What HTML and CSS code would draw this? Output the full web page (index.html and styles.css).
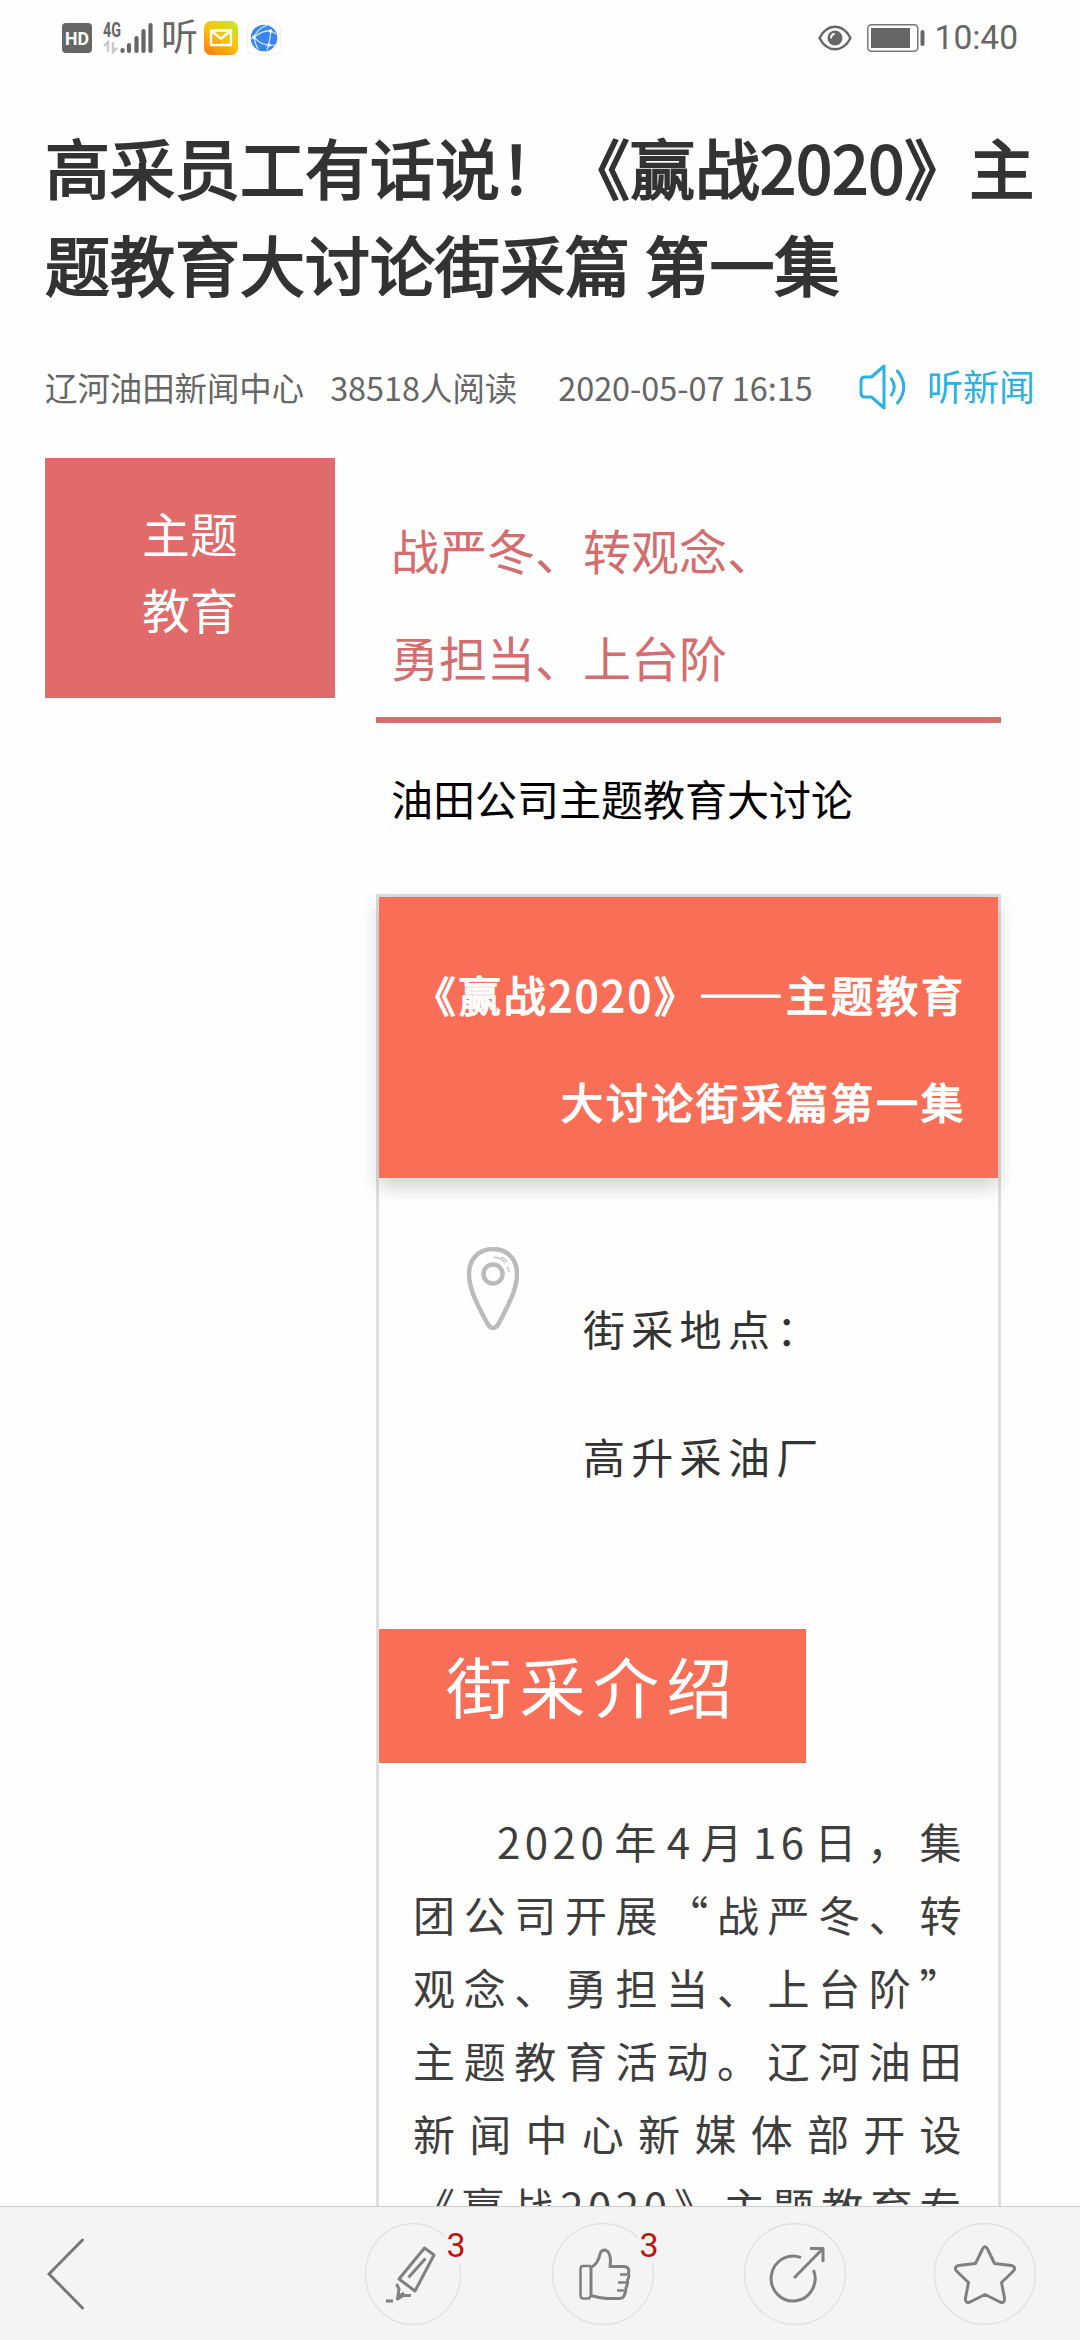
FILE: index.html
```html
<!DOCTYPE html>
<html lang="zh-CN">
<head>
    <meta charset="utf-8" />
    <title>高采员工有话说！</title>
    <link rel="stylesheet" href="styles.css">
</head>
<body>

<!--状态栏-->
<div class="status">
    <div class="status-left">
        <svg width="30" height="30" viewBox="0 0 30 30">
            <rect width="30" height="30" rx="4" fill="#666"/>
            <text x="3" y="21.5" class="hd" textLength="24" lengthAdjust="spacingAndGlyphs">HD</text>
        </svg>
        <svg class="signal" width="52" height="34" viewBox="0 0 52 34">
            <text x="0" y="15.5" class="net" textLength="18" lengthAdjust="spacingAndGlyphs">4G</text>
            <path d="M1 25l4-4v10M10 21v10l4-4" stroke="#ccc" stroke-width="2.5" fill="none"/>
            <path d="M19.500 29v1M26 24v6M33.500 17v13M40.500 10v20M47.500 4v26" stroke="#666" stroke-width="4.200" stroke-linecap="round"/>
        </svg>
        <span class="status-ting">听</span>
        <svg class="mail" width="36" height="36" viewBox="0 0 36 36">
            <defs>
                <linearGradient id="mailBg" x1="0.1" y1="1" x2="0.8" y2="0">
                    <stop offset="0" stop-color="#ff7a10"/>
                    <stop offset="0.5" stop-color="#ffbd08"/>
                    <stop offset="1" stop-color="#c8e820"/>
                </linearGradient>
            </defs>
            <rect x="1" y="1" width="34" height="34" rx="7" fill="url(#mailBg)"/>
            <path d="M8 10.500h20v14.500h-20zM8.500 11l9.500 7.500l9.500-7.500" fill="none" stroke="#fff" stroke-width="2.400" stroke-linejoin="round"/>
        </svg>
        <svg width="34" height="34" viewBox="0 0 34 34">
            <rect x=".5" y=".5" width="33" height="33" rx="7" fill="#fff" stroke="#f1f1f1"/>
            <circle cx="17" cy="17" r="13.300" fill="#3a86ee"/>
            <path d="M20.500 4Q10 8 7 16Q15 26 29 24M7 16Q16 9 24 10Q23 20 20 29M24 10l5 3M7 16l-3 2M7 16Q8 23 11 28" fill="none" stroke="#d9eaff" stroke-width="1.200"/>
            <circle cx="7" cy="16" r="1.800" fill="#fff"/><circle cx="23.500" cy="10" r="1.800" fill="#fff"/><circle cx="22" cy="24" r="1.800" fill="#fff"/>
        </svg>
    </div>
    <div class="status-right">
        <svg width="34" height="26" viewBox="0 0 34 26">
            <path d="M1.500 13C9-2 25-2 32.500 13C25 28 9 28 1.500 13z" fill="none" stroke="#666" stroke-width="2.400"/>
            <circle cx="17" cy="13" r="7.500" fill="#666"/>
            <path d="M13 12.500Q13.500 9.500 16 9" fill="none" stroke="#fff" stroke-width="2" stroke-linecap="round"/>
        </svg>
        <svg class="battery" width="58" height="28" viewBox="0 0 58 28">
            <rect x=".8" y=".8" width="50" height="26.400" rx="3.500" fill="none" stroke="#777" stroke-width="1.500"/>
            <rect x="4" y="4" width="39" height="20" fill="#666"/>
            <rect x="53.500" y="6" width="4" height="16" rx="2" fill="#666"/>
        </svg>
        <span class="time">10:40</span>
    </div>
</div>

<!--文章内容-->
<div class="article">
    <h1 class="title">高采员工有话说！《赢战2020》主题教育大讨论街采篇 第一集</h1>

    <div class="meta">
        <span class="meta-from">辽河油田新闻中心</span>
        <span class="meta-read">38518人阅读</span>
        <span class="meta-date">2020-05-07 16:15</span>
        <a class="listen">
            <svg width="48" height="46" viewBox="0 0 48 46">
                <path d="M25 2L12.500 13H6Q2 13 2 17V29Q2 33 6 33H12.500L25 44z" fill="none" stroke="#2bb1e3" stroke-width="3" stroke-linejoin="round"/>
                <path d="M32.500 15Q38 23 32.500 31M38.500 7Q51 23 38.500 39" fill="none" stroke="#2bb1e3" stroke-width="3" stroke-linecap="round"/>
            </svg>
            <span class="listen-text">听新闻</span>
        </a>
    </div>

    <div class="main">
        <div class="tag">主题<br>教育</div>
        <div class="column">
            <div class="slogan">战严冬、转观念、<br>勇担当、上台阶</div>
            <div class="subtitle">油田公司主题教育大讨论</div>

            <div class="card">
                <div class="card-head">《赢战2020》——主题教育<br>大讨论街采篇第一集</div>
                <div class="place">
                    <svg class="pin" width="52" height="83" viewBox="0 0 52 83">
                        <path d="M26 2C12 2 2 12 2 27C2 44 13 62 20 76Q26 86 32 76C39 62 50 44 50 27C50 12 40 2 26 2z" fill="none" stroke="#bbb" stroke-width="4.500"/>
                        <circle cx="26" cy="27" r="9.500" fill="none" stroke="#bbb" stroke-width="4.500"/>
                        <path d="M27 10Q35 11 38 16M40 20Q42 22 42 25M34 10Q39 12 40 15" fill="none" stroke="#c8c8c8" stroke-width="1.500"/>
                    </svg>
                    <div class="place-text">街采地点：<br>高升采油厂</div>
                </div>
                <div class="label">街采介绍</div>
                <p class="text">2020年4月16日，集团公司开展“战严冬、转观念、勇担当、上台阶”主题教育活动。辽河油田新闻中心新媒体部开设《赢战2020》主题教育专</p>
            </div>
        </div>
    </div>
</div>

<!--底部工具栏-->
<div class="footer">
    <svg class="back" width="38" height="72" viewBox="0 0 38 72">
        <path d="M35.500 2L2 36L35.500 70" fill="none" stroke="#777" stroke-width="3" stroke-linecap="round"/>
    </svg>
    <a class="btn btn-edit">
        <svg width="96" height="102" viewBox="0 0 96 102">
            <ellipse cx="48" cy="51" rx="47.500" ry="50.500" class="ring"/>
            <path d="M59.500 25L69 32L50 68L34 56zM60.500 35.500L43.500 54.500" class="line"/>
            <path d="M31.500 61L34 66L32.500 76L38 72.500L46 72.500M33 74L39 70M21 78H28" class="line"/>
        </svg>
        <span class="num">3</span>
    </a>
    <a class="btn btn-like">
        <svg width="102" height="102" viewBox="0 0 102 102">
            <ellipse cx="51" cy="51" rx="50.500" ry="50.500" class="ring"/>
            <path d="M39 44.500Q46 41 48 31Q49 27 53 27Q60 29 58 43.500H72Q78 44 76.500 50Q77.500 54 75.500 57Q76 61 74 65Q74 70 71.500 74Q70 75.500 67 75.500H55Q47 75 39 72.500z" class="line"/>
            <path d="M39 43H31Q28.500 43 28.500 46V72Q28.500 75.500 31 75.500H37L39 72.500M68 51.500H75M66 59.500H74M65 67.500H72" class="line thin"/>
        </svg>
        <span class="num">3</span>
    </a>
    <a class="btn btn-share">
        <svg width="102" height="102" viewBox="0 0 102 102">
            <ellipse cx="51" cy="51" rx="50.500" ry="50.500" class="ring"/>
            <path d="M57 34.500A22 22.500 0 1 0 69.500 47M50 55L79 25.500M66 25.500H79V39" class="line"/>
        </svg>
    </a>
    <a class="btn btn-fav">
        <svg width="102" height="102" viewBox="0 0 102 102">
            <ellipse cx="51" cy="51" rx="50.500" ry="50.500" class="ring"/>
            <path d="M48.500 26Q51 21.500 53.500 26L60.500 40.500L77.500 42.500Q82.500 44 79.500 48L67.500 59.500L70.500 75Q71 81 66 79L51 71.500L36 79Q31 81 31.500 75L34.500 59.500L22.500 48Q19.500 44 24.500 42.500L41.500 40.500z" class="line"/>
        </svg>
    </a>
</div>

</body>
</html>
```

FILE: styles.css
```css
*{box-sizing: border-box;}

body{
    margin: 0px;width: 1080px;height: 2340px;overflow: hidden;
    display: flex;flex-direction: column;
    background: #fefefe;
    font-family: "Noto Sans CJK SC", sans-serif;
}
svg{display: block;flex: none;}

/*状态栏*/
.status{
    height: 76px;flex: none;
    padding: 0px 62px;
    display: flex;justify-content: space-between;align-items: center;
}
.status-left,.status-right{display: flex;align-items: center;}
.hd{font: bold 19px Roboto, sans-serif;fill: #fff;}
.net{font: bold 20px Roboto, sans-serif;fill: #666;}
.signal{margin-left: 11px;}
.status-ting{
    width: 37px;margin: -6px 0px 0px 6px;
    font-size: 37px;line-height: 40px;font-weight: 400;color: #666;
}
.mail{margin: 0px 8px 0px 5px;}
.battery{margin-left: 15px;}
.time{
    margin-left: 10px;
    font: 33.5px/40px Roboto, sans-serif;color: #666;
}

/*文章*/
.article{
    flex: 1;min-height: 0px;overflow: hidden;
    padding: 42px 45px 0px;
}
.title{
    margin: 0px;
    font-size: 65px;line-height: 97px;font-weight: 400;color: #333;
    -webkit-text-stroke: 2px #333;
}
.meta{
    height: 50px;margin-top: 50px;
    display: flex;align-items: center;
    font-size: 32.4px;line-height: 50px;color: #666;
    white-space: nowrap;
}
.meta-read{margin-left: 26px;}
.meta-date{margin-left: 41px;}
.listen{
    margin-left: auto;
    display: flex;align-items: center;gap: 20px;
    font-size: 36px;color: #2bb1e3;
}
.listen-text{margin-top: -4px;}

.main{
    margin-top: 46px;
    display: flex;align-items: flex-start;
}
.tag{
    width: 290px;height: 240px;padding-top: 36px;
    background: #e16a6b;color: #fff;
    font-size: 48px;line-height: 76px;text-align: center;
}
.column{width: 625px;margin-left: 41px;}
.slogan{
    padding: 38px 0px 7px 15px;
    border-bottom: 6px solid #d46d6e;
    font-size: 48px;line-height: 107px;color: #d46d6e;
}
.subtitle{
    margin: 21px 0px 43px;padding-left: 15px;
    font-size: 42px;line-height: 107px;color: #000;
}

/*卡片*/
.card{border: 3px solid #dedede;font-size: 42px;}
.card-head{
    height: 281px;padding: 43px 32px 0px 0px;
    background: #f96e57;color: #fff;
    box-shadow: 0px 9px 18px rgba(0,0,0,0.18);
    line-height: 107px;letter-spacing: 3px;text-align: right;
    -webkit-text-stroke: 1.500px #fff;
}
.place{
    padding: 69px 0px 109px 88px;
    display: flex;align-items: flex-start;
    line-height: 128px;letter-spacing: 6.300px;color: #333;
}
.place-text{margin: 17px 0px 0px 64px;}
.label{
    width: 427px;height: 134px;padding-left: 67px;
    background: #f96e57;color: #fff;
    font-size: 66px;line-height: 110px;letter-spacing: 7.500px;
}
.text{
    margin: 41px 32px 0px 34px;
    line-height: 73px;letter-spacing: 4.500px;color: #3e3e3e;
    text-indent: 84px;text-align: justify;text-align-last: justify;
}

/*底部工具栏*/
.footer{
    height: 134px;flex: none;
    padding-left: 47px;
    display: flex;align-items: center;
    background: #f4f4f4;border-top: 1px solid #ccc;
}
.btn{position: relative;}
.btn-edit{margin-left: 280px;}
.btn-like{margin-left: 91px;}
.btn-share{margin-left: 90px;}
.btn-fav{margin-left: 88px;}
.ring{fill: none;stroke: #e0e0e0;stroke-width: 1.300;}
.line{fill: none;stroke: #808080;stroke-width: 3;stroke-linejoin: round;}
.thin{stroke-width: 2.500;}
.num{
    position: absolute;top: 0px;right: -6px;
    width: 22px;height: 40px;padding-top: 3px;
    background: #f4f4f4;color: #c41212;
    font: 34px/38px Roboto, sans-serif;text-align: center;
}
```
